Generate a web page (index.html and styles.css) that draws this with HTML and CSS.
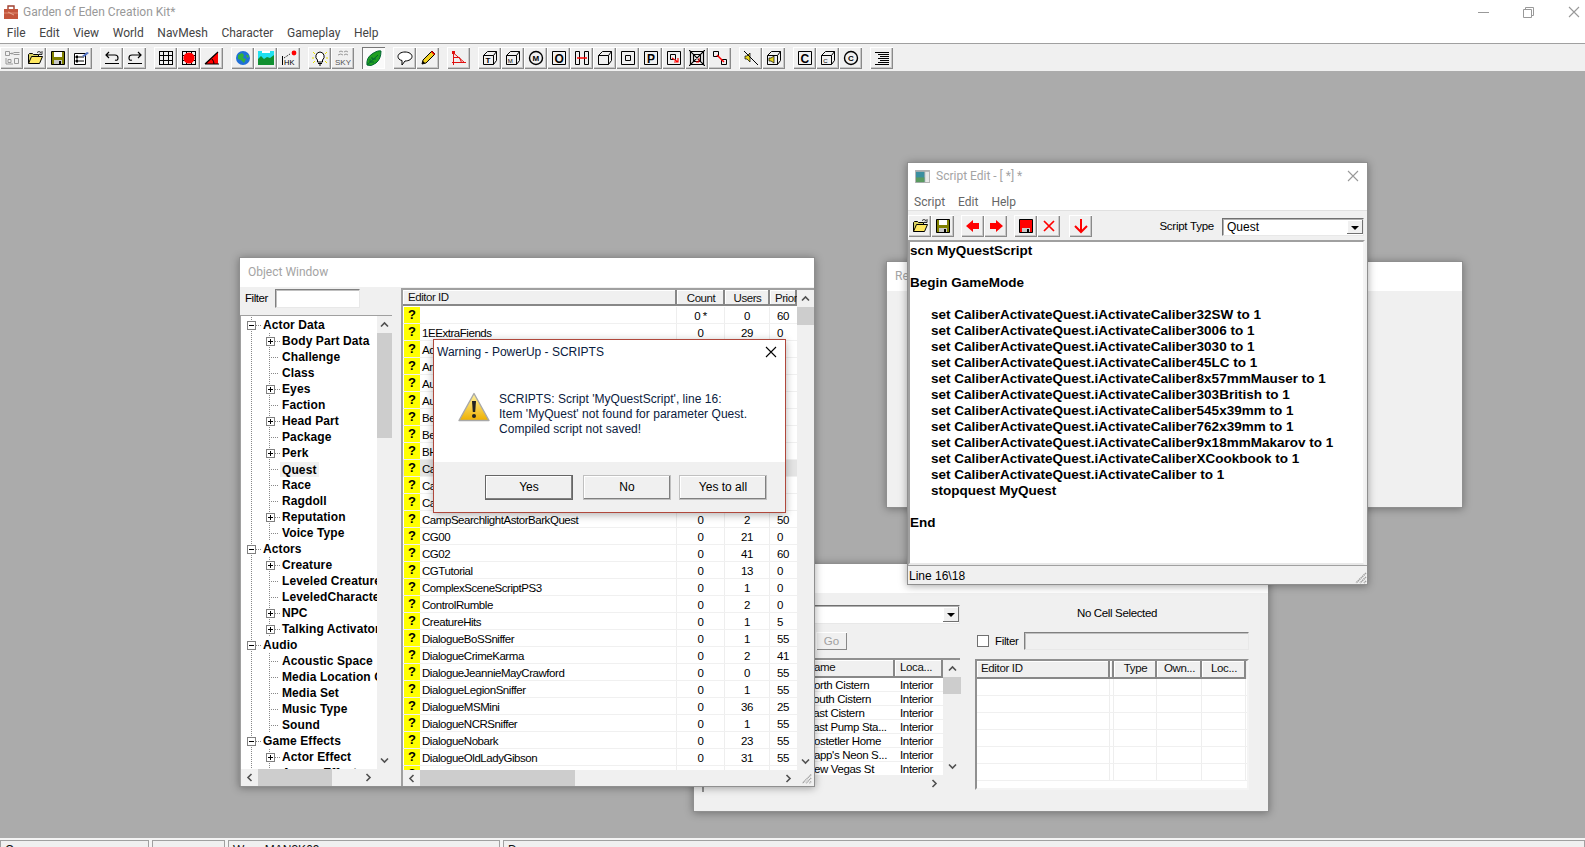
FILE: index.html
```html
<!DOCTYPE html>
<html lang="en">
<head>
<meta charset="utf-8">
<title>Garden of Eden Creation Kit*</title>
<link rel="stylesheet" href="styles.css">
</head>
<body>
<svg class="sprite" aria-hidden="true">
  <symbol id="up" viewBox="0 0 9 7"><path d="M1 5.500l3.500-3.500 3.500 3.500" fill="none" stroke="#505050" stroke-width="1.600"/></symbol>
  <symbol id="down" viewBox="0 0 9 7"><path d="M1 1.500l3.500 3.500 3.500-3.500" fill="none" stroke="#505050" stroke-width="1.600"/></symbol>
  <symbol id="left" viewBox="0 0 7 9"><path d="M5.500 1L2 4.500 5.500 8" fill="none" stroke="#505050" stroke-width="1.600"/></symbol>
  <symbol id="right" viewBox="0 0 7 9"><path d="M1.500 1L5 4.500 1.500 8" fill="none" stroke="#505050" stroke-width="1.600"/></symbol>
  <symbol id="x" viewBox="0 0 12 12"><path d="M1 1l10 10M11 1L1 11" fill="none" stroke="currentColor" stroke-width="1.100"/></symbol>
  <symbol id="grip" viewBox="0 0 14 14"><path d="M13 3L3 13M13 7l-6 6M13 11l-2 2" fill="none" stroke="#a0a0a0" stroke-width="1.600" stroke-dasharray="1.400 .6"/></symbol>
  <symbol id="open" viewBox="0 0 16 16"><path d="M1.500 13.500v-9l1-1h3l1 1h5v2" fill="#d8d060" stroke="#000"/><path d="M1.500 13.500l3-7h11l-3 7z" fill="#ffe860" stroke="#000"/><path d="M10 2.500q2-2 4 0l1-1v3h-3l1-1" fill="none" stroke="#000" stroke-width=".8"/></symbol>
  <symbol id="save" viewBox="0 0 16 16"><path d="M1.500 1.500h13v13h-13z" fill="#808000" stroke="#000"/><path d="M4 2h8v5H4z" fill="#fff"/><path d="M4 10h8v4H4z" fill="#c8c8c8"/><path d="M9 11h2v3H9z" fill="#000"/></symbol>
  <symbol id="cube" viewBox="0 0 16 16"><path d="M1.500 5.500h10v9h-10zM1.500 5.500l4-4h9v9l-3 4M11.500 5.500l3-4" fill="none" stroke="#000"/></symbol>
</svg>

<header class="titlebar">
  <svg class="appicon" viewBox="0 0 16 16"><path d="M1 5h14v10H1z" fill="#c4563c"/><path d="M5 5V2h6v3" fill="none" stroke="#a04030" stroke-width="1.400"/><path d="M1 9h14" stroke="#e08a70"/><path d="M5 8l6 3" stroke="#e8a890"/></svg>
  <span class="apptitle">Garden of Eden Creation Kit*</span>
  <div class="winctl">
    <svg viewBox="0 0 11 11"><path d="M0 5.500h11" stroke="#999"/></svg>
    <svg viewBox="0 0 11 11"><path d="M.5 2.500h8v8h-8zM2.500 2.500v-2h8v8h-2" fill="none" stroke="#999"/></svg>
    <svg viewBox="0 0 12 12" class="dim"><use href="#x"/></svg>
  </div>
</header>
<nav class="menubar">
  <span>File</span><span>Edit</span><span>View</span><span>World</span><span>NavMesh</span><span>Character</span><span>Gameplay</span><span>Help</span>
</nav>

<div class="toolbar">
  <div class="tg">
    <button class="tb"><svg viewBox="0 0 16 16"><path d="M1.500 1.500h4v4h-4zM9.500 4.500h6M9.500 2.500h6M2 8v6h7M4 9.500h3v3H4zM10.500 8.500h4v5h-4zM6 3.500h3l-1-1M9 3.500l-1 1" fill="none" stroke="#999"/></svg></button>
    <button class="tb"><svg viewBox="0 0 16 16"><use href="#open"/></svg></button>
    <button class="tb"><svg viewBox="0 0 16 16"><use href="#save"/></svg></button>
    <button class="tb"><svg viewBox="0 0 16 16"><path d="M1.500 3.500h11v11h-11z" fill="#fff" stroke="#000"/><path d="M3 6h2v2H3zM3 10h2v2H3zM6 7h5M6 11h5" stroke="#000"/><path d="M9 6l5-4 2 1-5 4z" fill="#5070c0"/></svg></button>
  </div>
  <div class="tg">
    <button class="tb"><svg viewBox="0 0 16 16"><path d="M5 2L2 5l3 3M2 5h9q3 0 3 3t-3 2" fill="none" stroke="#000" stroke-width="1.200"/><path d="M1 13h14v1H1z"/></svg></button>
    <button class="tb"><svg viewBox="0 0 16 16"><path d="M11 2l3 3-3 3M14 5H5q-3 0-3 3t3 2" fill="none" stroke="#000" stroke-width="1.200"/><path d="M1 13h14v1H1z"/></svg></button>
  </div>
  <div class="tg">
    <button class="tb"><svg viewBox="0 0 16 16"><path d="M1.500 1v14M5.500 1v14M10.500 1v14M14.500 1v14M1 1.500h14M1 5.500h14M1 10.500h14M1 14.500h14" stroke="#000" fill="none"/></svg></button>
    <button class="tb"><svg viewBox="0 0 16 16"><path d="M1.500 1v14M5.500 1v14M10.500 1v14M14.500 1v14M1 1.500h14M1 5.500h14M1 10.500h14M1 14.500h14" stroke="#000" fill="none"/><circle cx="8" cy="8" r="5.600" fill="#f00"/></svg></button>
    <button class="tb"><svg viewBox="0 0 16 16"><path d="M1 14L14 2v12z" fill="#f00"/><path d="M1 14h14M1 14L14 2" stroke="#000" stroke-width="1.200"/><path d="M10 14q0-3-2-5" fill="none" stroke="#000"/></svg></button>
  </div>
  <div class="tg">
    <button class="tb"><svg viewBox="0 0 16 16"><circle cx="8" cy="8" r="7" fill="#2070d8"/><path d="M3 5l4-2 2 2-1 3 3 1-2 4-3-3-3-1z" fill="#30b040"/><path d="M11 5h2l1 2-2 1z" fill="#30b040"/></svg></button>
    <button class="tb"><svg viewBox="0 0 16 16"><path d="M0 1h16v14H0z" fill="#20e0f0"/><path d="M0 15V9l3-3 3 3 3-2 3 1 4-3v10z" fill="#109030"/><path d="M4 1h8v2H4z" fill="#fff"/></svg></button>
    <button class="tb"><svg viewBox="0 0 16 16"><circle cx="13" cy="3" r="2.400" fill="#f00"/><path d="M1.500 6v9" stroke="#000"/><path d="M3 8l6-4" stroke="#000" stroke-dasharray="1 1"/><text x="3" y="15" class="ic-t hk">HK</text></svg></button>
  </div>
  <div class="tg">
    <button class="tb"><svg viewBox="0 0 16 16"><path d="M8 2a4.500 4.500 0 0 0-2.500 8v2h5v-2A4.500 4.500 0 0 0 8 2z" fill="#fff" stroke="#000"/><path d="M6 13.500h4M7 15h2" stroke="#000"/><path d="M1 2l2 2M15 2l-2 2M0 8h2M14 8h2M1 13l2-2M15 13l-2-2" stroke="#e8e000"/></svg></button>
    <button class="tb"><svg viewBox="0 0 16 16"><path d="M4 2q2-2 4 0M9 2q2-2 4 0M3 5q3-2 5 0M9 5q2-2 4 0" fill="none" stroke="#999"/><text x="0" y="15" class="ic-t big">SKY</text></svg></button>
  </div>
  <div class="tg">
    <button class="tb on"><svg viewBox="0 0 16 16"><path d="M1 15q-1-7 5-11t9-3q0 8-5 12t-9 2z" fill="#20a020" stroke="#063"/><path d="M1 15L12 5M4 9v3h4M6 7v2h4" fill="none" stroke="#063"/></svg></button>
  </div>
  <div class="tg">
    <button class="tb"><svg viewBox="0 0 16 16"><path d="M8 2c4 0 7 2 7 4.500S12 11 8 11l-3 4v-4.500C2 10 1 8 1 6.500 1 4 4 2 8 2z" fill="#fff" stroke="#000"/></svg></button>
    <button class="tb"><svg viewBox="0 0 16 16"><path d="M2 14l1-4 9-9 3 3-9 9z" fill="#f0d020" stroke="#000"/><path d="M12 1l3 3-1 1-3-3z" fill="#f00"/><path d="M2 14l1-3 2 2z"/></svg></button>
  </div>
  <div class="tg">
    <button class="tb"><svg viewBox="0 0 16 16"><path d="M2.500 1v14M1 12.500h14M2.500 3l11 9.500M2.500 7.500h6l2 5" fill="none" stroke="#e01010"/><path d="M1 1h3v3H1z" fill="#e01010"/></svg></button>
  </div>
  <div class="tg">
    <button class="tb"><svg viewBox="0 0 16 16"><use href="#cube"/><text x="3.500" y="13" class="ic-t bold">T</text></svg></button>
    <button class="tb"><svg viewBox="0 0 16 16"><use href="#cube"/><text x="2.800" y="13" class="ic-t">M</text></svg></button>
    <button class="tb"><svg viewBox="0 0 16 16"><circle cx="8" cy="8" r="6.500" fill="none" stroke="#000" stroke-width="1.400"/><text x="4.600" y="11" class="ic-t bold">M</text></svg></button>
    <button class="tb"><svg viewBox="0 0 16 16"><path d="M1.500 1.500h13v13h-13z" fill="none" stroke="#000"/><text x="3.500" y="12.500" class="ic-t huge">O</text></svg></button>
    <button class="tb"><svg viewBox="0 0 16 16"><path d="M1.500 1.500h4v13h-4zM10.500 1.500h4v13h-4z" fill="none" stroke="#000"/><path d="M3 8h10" stroke="#f00" stroke-width="1.500"/></svg></button>
    <button class="tb"><svg viewBox="0 0 16 16"><use href="#cube"/></svg></button>
    <button class="tb"><svg viewBox="0 0 16 16"><path d="M1.500 1.500h13v13h-13zM5.500 5.500h5v5h-5z" fill="none" stroke="#000"/></svg></button>
    <button class="tb"><svg viewBox="0 0 16 16"><path d="M1.500 1.500h13v13h-13z" fill="none" stroke="#000"/><text x="4" y="12.500" class="ic-t huge">P</text></svg></button>
    <button class="tb"><svg viewBox="0 0 16 16"><path d="M1.500 1.500h13v13h-13zM4.500 4.500h5v5h-5z" fill="none" stroke="#000"/><path d="M6 8l6 4M12 8v4H8" fill="none" stroke="#f00" stroke-width="1.200"/></svg></button>
    <button class="tb"><svg viewBox="0 0 16 16"><path d="M1.500 1.500h13v13h-13zM4.500 4.500h7v7h-7zM0 0l16 16M16 0L0 16" fill="none" stroke="#000" stroke-width="1.200"/><path d="M10 8v4H7" fill="none" stroke="#f00"/></svg></button>
    <button class="tb"><svg viewBox="0 0 16 16"><path d="M1.500 1.500h5v5h-5zM9.500 9.500h5v5h-5z" fill="none" stroke="#000"/><path d="M5 5l7 7" stroke="#f00" stroke-width="1.500"/></svg></button>
  </div>
  <div class="tg">
    <button class="tb"><svg viewBox="0 0 16 16"><path d="M2 6h2l3-3v9L4 9H2z" fill="#e8d820" stroke="#000" stroke-width=".7"/><path d="M1 1l14 14" stroke="#000"/></svg></button>
    <button class="tb"><svg viewBox="0 0 16 16"><use href="#cube"/><path d="M3 8h2l3-2v7l-3-2H3z" fill="#e8d820" stroke="#000" stroke-width=".7"/></svg></button>
  </div>
  <div class="tg">
    <button class="tb"><svg viewBox="0 0 16 16"><path d="M1.500 1.500h13v13h-13z" fill="none" stroke="#000"/><text x="3.500" y="12.500" class="ic-t huge">C</text></svg></button>
    <button class="tb"><svg viewBox="0 0 16 16"><use href="#cube"/><text x="3.200" y="13" class="ic-t">C</text></svg></button>
    <button class="tb"><svg viewBox="0 0 16 16"><circle cx="8" cy="8" r="6.500" fill="none" stroke="#000" stroke-width="1.400"/><text x="5" y="11" class="ic-t bold">C</text></svg></button>
  </div>
  <div class="tg">
    <button class="tb"><svg viewBox="0 0 16 16"><path d="M1 2.500h14M4 4.500h11M6 6.500h9M4 8.500h11M6 10.500h9M4 12.500h11M1 14.500h14" stroke="#000" fill="none"/></svg></button>
  </div>
</div>

<main class="desktop">
  <!-- Render window (behind) -->
  <section class="win render">
    <div class="wtitle tall"><span class="wname">Re</span></div>
  </section>

  <!-- Cell view window (behind) -->
  <section class="win cellview">
    <div class="wtitle tall"></div>
    <div class="cv-body">
      <div class="cv-left">
        <div class="combo cv-combo"><span>Interior Cells &amp; Areas</span><i class="combo-btn"></i></div>
        <div class="cv-go"><button class="btn-flat">Go</button></div>
        <div class="cv-list">
          <div class="cv-table">
            <div class="hdr cv-row"><span class="hc">X</span><span class="hc">Y</span><span class="hc">Name</span><span class="hc">Loca...</span></div>
            <div class="cv-row"><span></span><span></span><span>North Cistern</span><span>Interior</span></div>
            <div class="cv-row"><span></span><span></span><span>South Cistern</span><span>Interior</span></div>
            <div class="cv-row"><span></span><span></span><span>East Cistern</span><span>Interior</span></div>
            <div class="cv-row"><span></span><span></span><span>East Pump Sta...</span><span>Interior</span></div>
            <div class="cv-row"><span></span><span></span><span>Hostetler Home</span><span>Interior</span></div>
            <div class="cv-row"><span></span><span></span><span>Rapp's Neon S...</span><span>Interior</span></div>
            <div class="cv-row"><span></span><span></span><span>New Vegas St</span><span>Interior</span></div>
          </div>
          <div class="vs cv-vs"><svg class="ar"><use href="#up"/></svg><i class="thumb t-cv"></i><i class="sp"></i><svg class="ar"><use href="#down"/></svg></div>
          <div class="hs cv-hs"><i class="sp"></i><svg class="arh"><use href="#right"/></svg></div>
        </div>
      </div>
      <div class="cv-right">
        <div class="cv-nocell">No Cell Selected</div>
        <div class="cv-filter"><i class="check"></i><span>Filter</span><i class="field"></i></div>
        <div class="cv-grid">
          <div class="hdr cg-row"><span class="hc">Editor ID</span><span class="hc tiny"></span><span class="hc ctr">Type</span><span class="hc ctr">Own...</span><span class="hc ctr">Loc...</span></div>
          <div class="cg-row"><span></span><span></span><span></span><span></span><span></span></div>
          <div class="cg-row"><span></span><span></span><span></span><span></span><span></span></div>
          <div class="cg-row"><span></span><span></span><span></span><span></span><span></span></div>
          <div class="cg-row"><span></span><span></span><span></span><span></span><span></span></div>
          <div class="cg-row"><span></span><span></span><span></span><span></span><span></span></div>
          <div class="cg-row"><span></span><span></span><span></span><span></span><span></span></div>
        </div>
      </div>
    </div>
  </section>

  <!-- Object window -->
  <section class="win objwin">
    <div class="wtitle tall"><span class="wname">Object Window</span></div>
    <div class="ob-body">
      <div class="ob-left">
        <div class="ob-filter"><span>Filter</span><i class="field white"></i></div>
        <div class="tree-box">
          <div class="tree">
            <div class="tr"><i class="bx"></i>Actor Data</div>
            <div class="tr ch"><i class="bx plus"></i>Body Part Data</div>
            <div class="tr ch"><i class="nb"></i>Challenge</div>
            <div class="tr ch"><i class="nb"></i>Class</div>
            <div class="tr ch"><i class="bx plus"></i>Eyes</div>
            <div class="tr ch"><i class="nb"></i>Faction</div>
            <div class="tr ch"><i class="bx plus"></i>Head Part</div>
            <div class="tr ch"><i class="nb"></i>Package</div>
            <div class="tr ch"><i class="bx plus"></i>Perk</div>
            <div class="tr ch"><i class="nb"></i><b class="sel">Quest</b></div>
            <div class="tr ch"><i class="nb"></i>Race</div>
            <div class="tr ch"><i class="nb"></i>Ragdoll</div>
            <div class="tr ch"><i class="bx plus"></i>Reputation</div>
            <div class="tr ch last"><i class="nb"></i>Voice Type</div>
            <div class="tr"><i class="bx"></i>Actors</div>
            <div class="tr ch"><i class="bx plus"></i>Creature</div>
            <div class="tr ch"><i class="nb"></i>Leveled Creature</div>
            <div class="tr ch"><i class="nb"></i>LeveledCharacter</div>
            <div class="tr ch"><i class="bx plus"></i>NPC</div>
            <div class="tr ch last"><i class="bx plus"></i>Talking Activator</div>
            <div class="tr"><i class="bx"></i>Audio</div>
            <div class="tr ch"><i class="nb"></i>Acoustic Space</div>
            <div class="tr ch"><i class="nb"></i>Media Location Controller</div>
            <div class="tr ch"><i class="nb"></i>Media Set</div>
            <div class="tr ch"><i class="nb"></i>Music Type</div>
            <div class="tr ch last"><i class="nb"></i>Sound</div>
            <div class="tr"><i class="bx"></i>Game Effects</div>
            <div class="tr ch"><i class="bx plus"></i>Actor Effect</div>
            <div class="tr ch"><i class="nb"></i>Ammo Effect</div>
          </div>
          <div class="vs"><svg class="ar"><use href="#up"/></svg><i class="thumb t-tree"></i><i class="sp"></i><svg class="ar"><use href="#down"/></svg></div>
          <div class="hs"><svg class="arh"><use href="#left"/></svg><i class="hthumb t-th"></i><i class="sp"></i><svg class="arh"><use href="#right"/></svg></div>
        </div>
      </div>
      <div class="ob-list">
        <div class="listview">
          <div class="hdr lv-row"><span class="hc">Editor ID</span><span class="hc ctr">Count</span><span class="hc ctr">Users</span><span class="hc">Prior</span></div>
          <div class="lv-row"><span><i class="q">?</i></span><span>0 *</span><span>0</span><span>60</span></div>
          <div class="lv-row"><span><i class="q">?</i>1EExtraFiends</span><span>0</span><span>29</span><span>0</span></div>
          <div class="lv-row"><span><i class="q">?</i>AdvancedStart</span><span>0</span><span>1</span><span>0</span></div>
          <div class="lv-row"><span><i class="q">?</i>ArmorSet</span><span>0</span><span>1</span><span>0</span></div>
          <div class="lv-row"><span><i class="q">?</i>AudioQuest</span><span>0</span><span>1</span><span>0</span></div>
          <div class="lv-row"><span><i class="q">?</i>AutoDoc</span><span>0</span><span>1</span><span>0</span></div>
          <div class="lv-row"><span><i class="q">?</i>BeckyQuest</span><span>0</span><span>1</span><span>0</span></div>
          <div class="lv-row"><span><i class="q">?</i>BennyQuest</span><span>0</span><span>1</span><span>0</span></div>
          <div class="lv-row"><span><i class="q">?</i>BHQuest</span><span>0</span><span>1</span><span>0</span></div>
          <div class="lv-row hl"><span><i class="q">?</i>CaliberActivate</span><span>0</span><span>1</span><span>0</span></div>
          <div class="lv-row"><span><i class="q">?</i>CampQuest</span><span>0</span><span>1</span><span>0</span></div>
          <div class="lv-row"><span><i class="q">?</i>CampGolf</span><span>0</span><span>1</span><span>0</span></div>
          <div class="lv-row"><span><i class="q">?</i>CampSearchlightAstorBarkQuest</span><span>0</span><span>2</span><span>50</span></div>
          <div class="lv-row"><span><i class="q">?</i>CG00</span><span>0</span><span>21</span><span>0</span></div>
          <div class="lv-row"><span><i class="q">?</i>CG02</span><span>0</span><span>41</span><span>60</span></div>
          <div class="lv-row"><span><i class="q">?</i>CGTutorial</span><span>0</span><span>13</span><span>0</span></div>
          <div class="lv-row"><span><i class="q">?</i>ComplexSceneScriptPS3</span><span>0</span><span>1</span><span>0</span></div>
          <div class="lv-row"><span><i class="q">?</i>ControlRumble</span><span>0</span><span>2</span><span>0</span></div>
          <div class="lv-row"><span><i class="q">?</i>CreatureHits</span><span>0</span><span>1</span><span>5</span></div>
          <div class="lv-row"><span><i class="q">?</i>DialogueBoSSniffer</span><span>0</span><span>1</span><span>55</span></div>
          <div class="lv-row"><span><i class="q">?</i>DialogueCrimeKarma</span><span>0</span><span>2</span><span>41</span></div>
          <div class="lv-row"><span><i class="q">?</i>DialogueJeannieMayCrawford</span><span>0</span><span>0</span><span>55</span></div>
          <div class="lv-row"><span><i class="q">?</i>DialogueLegionSniffer</span><span>0</span><span>1</span><span>55</span></div>
          <div class="lv-row"><span><i class="q">?</i>DialogueMSMini</span><span>0</span><span>36</span><span>25</span></div>
          <div class="lv-row"><span><i class="q">?</i>DialogueNCRSniffer</span><span>0</span><span>1</span><span>55</span></div>
          <div class="lv-row"><span><i class="q">?</i>DialogueNobark</span><span>0</span><span>23</span><span>55</span></div>
          <div class="lv-row"><span><i class="q">?</i>DialogueOldLadyGibson</span><span>0</span><span>31</span><span>55</span></div>
          <div class="lv-row"><span><i class="q">?</i></span><span></span><span></span><span></span></div>
        </div>
        <div class="vs"><svg class="ar"><use href="#up"/></svg><i class="thumb t-lv"></i><i class="sp"></i><svg class="ar"><use href="#down"/></svg></div>
        <div class="hs"><svg class="arh"><use href="#left"/></svg><i class="hthumb t-lh"></i><i class="sp"></i><svg class="arh"><use href="#right"/></svg></div>
        <svg class="gripbox"><use href="#grip"/></svg>
      </div>
    </div>
  </section>

  <!-- Script editor -->
  <section class="win script">
    <div class="wtitle">
      <svg class="se-ico" viewBox="0 0 16 14"><path d="M0 0h16v14H0z" fill="#b0b0b0"/><path d="M1 2h9v11H1z" fill="#3b8fa0"/><path d="M1 8h9v5H1z" fill="#5a9a60"/><path d="M11 2h4v11h-4z" fill="#e8e8e8"/></svg>
      <span class="wname">Script Edit - [ *] *</span>
      <svg class="wclose"><use href="#x"/></svg>
    </div>
    <div class="se-menu"><span>Script</span><span>Edit</span><span>Help</span></div>
    <div class="se-tools">
      <div class="tg">
        <button class="tb"><svg viewBox="0 0 16 16"><use href="#open"/></svg></button>
        <button class="tb"><svg viewBox="0 0 16 16"><use href="#save"/></svg></button>
      </div>
      <div class="tg">
        <button class="tb"><svg viewBox="0 0 16 16"><path d="M1 8l7-6v3h6v6H8v3z" fill="#f00"/></svg></button>
        <button class="tb"><svg viewBox="0 0 16 16"><path d="M15 8L8 2v3H2v6h6v3z" fill="#f00"/></svg></button>
      </div>
      <div class="tg">
        <button class="tb"><svg viewBox="0 0 16 16"><path d="M1.500 1.500h13v13h-13z" fill="#f00" stroke="#000"/><path d="M4 10h8v4H4z" fill="#c8c8c8"/><path d="M9 11h2v3H9z"/></svg></button>
        <button class="tb"><svg viewBox="0 0 16 16"><path d="M3 3l10 10M13 3L3 13" stroke="#f00" stroke-width="1.700"/></svg></button>
      </div>
      <div class="tg last-tg">
        <button class="tb"><svg viewBox="0 0 16 16"><path d="M8 1v13M2 8l6 6 6-6" fill="none" stroke="#f00" stroke-width="2"/></svg></button>
      </div>
      <span class="se-label">Script Type</span>
      <div class="combo se-combo"><span>Quest</span><i class="combo-btn"></i></div>
    </div>
<pre class="code">scn MyQuestScript

Begin GameMode

&#9;set CaliberActivateQuest.iActivateCaliber32SW to 1
&#9;set CaliberActivateQuest.iActivateCaliber3006 to 1
&#9;set CaliberActivateQuest.iActivateCaliber3030 to 1
&#9;set CaliberActivateQuest.iActivateCaliber45LC to 1
&#9;set CaliberActivateQuest.iActivateCaliber8x57mmMauser to 1
&#9;set CaliberActivateQuest.iActivateCaliber303British to 1
&#9;set CaliberActivateQuest.iActivateCaliber545x39mm to 1
&#9;set CaliberActivateQuest.iActivateCaliber762x39mm to 1
&#9;set CaliberActivateQuest.iActivateCaliber9x18mmMakarov to 1
&#9;set CaliberActivateQuest.iActivateCaliberXCookbook to 1
&#9;set CaliberActivateQuest.iActivateCaliber to 1
&#9;stopquest MyQuest

End</pre>
    <div class="se-status"><span>Line 16\18</span><svg class="grip"><use href="#grip"/></svg></div>
  </section>

  <!-- Warning dialog -->
  <section class="dialog">
    <div class="dlg-title"><span>Warning - PowerUp - SCRIPTS</span><svg class="dlg-x"><use href="#x"/></svg></div>
    <div class="dlg-msg">
      <svg class="warn" viewBox="0 0 32 30">
        <defs><linearGradient id="wg" x1="0" y1="0" x2="0" y2="1"><stop offset="0" stop-color="#fff2a0"/><stop offset="1" stop-color="#eeb000"/></linearGradient></defs>
        <path d="M16 1.500L31 28.500H1z" fill="url(#wg)" stroke="#a8a8a8" stroke-width="1.400" stroke-linejoin="round"/>
        <path d="M14 9h4l-.8 11h-2.400z" fill="#222"/><circle cx="16" cy="24" r="2" fill="#222"/>
      </svg>
      <p>SCRIPTS: Script 'MyQuestScript', line 16:<br>Item 'MyQuest' not found for parameter Quest.<br>Compiled script not saved!</p>
    </div>
    <div class="dlg-foot">
      <button class="dbtn def">Yes</button>
      <button class="dbtn">No</button>
      <button class="dbtn">Yes to all</button>
    </div>
  </section>
</main>

<footer class="statusbar">
  <div class="sb s1">Camera</div>
  <div class="sb s2"></div>
  <div class="sb s3">Wor&nbsp;&nbsp;&nbsp;MAN3K09</div>
  <div class="sb s4">Done</div>
</footer>
</body>
</html>
```

FILE: styles.css
```css
* { box-sizing: border-box; }
html, body { margin: 0; height: 847px; overflow: hidden; }
body {
  display: flex; flex-direction: column;
  width: 1585px; background: #fff;
  font: 12px/16px "Liberation Sans", Arial, sans-serif; color: #000;
}
.sprite { width: 0; height: 0; position: absolute; }
button { font: inherit; padding: 0; margin: 0; color: inherit; }
i { font-style: normal; display: block; }

/* app chrome */
.titlebar { height: 24px; display: flex; align-items: center; padding: 0 5px 0 3px; flex: none; background: #fff; }
.appicon { width: 16px; height: 16px; margin-right: 4px; }
.apptitle { font: 12px Roboto, sans-serif; color: #999; }
.winctl { margin-left: auto; display: flex; gap: 34px; align-items: center; color: #999; }
.winctl svg { width: 11px; height: 11px; display: block; }
.winctl .dim { width: 12px; height: 12px; }
.menubar { height: 20px; flex: none; display: flex; font: 12px Roboto, sans-serif; color: #444; background: #fff; border-bottom: 1px solid #a0a0a0; padding-top: 1px; }
.menubar span { padding: 1px 6.800px 0; }
.toolbar { height: 27px; flex: none; background: #f0f0f0; display: flex; gap: 8px; padding: 3px 0 0 0; }
.tg { display: flex; }
.tb {
  width: 23px; height: 22px; border: 0; display: flex; align-items: center; justify-content: center;
  background: #f0f0f0;
  box-shadow: inset 1px 1px #fff, inset -1px -1px #8a8a8a, inset -2px -2px #c8c8c8;
}
.tb svg { width: 16px; height: 16px; display: block; }
.tb.on { background: #fafafa; box-shadow: inset 1px 1px #777, inset -1px -1px #fff; }
.ic-t { font: 6px "Liberation Sans", sans-serif; fill: #000; }
.ic-t.big { font-size: 8px; fill: #555; }
.ic-t.hk { font-size: 7.500px; }
.ic-t.bold { font-weight: 700; font-size: 8px; }
.ic-t.huge { font-weight: 700; font-size: 12px; }

.desktop { flex: 1; position: relative; background: #ababab; overflow: hidden; }
.statusbar { height: 9px; flex: none; display: flex; gap: 3px; background: #f4f4f4; overflow: hidden; padding-top: 2px; }
.sb { background: #f0f0f0; border: 1px solid #a0a0a0; border-width: 1px 1px 0 1px; padding-left: 4px; line-height: 14px; padding-top: 2px; color: #111; }
.s1 { width: 149px; }
.s2 { width: 73px; }
.s3 { width: 272px; }
.s4 { flex: 1; }

/* windows on the desktop */
.win { position: absolute; background: #f0f0f0; box-shadow: 0 1px 8px rgba(0,0,0,.35); border: 1px solid #8f8f8f; }
.render   { left: 886px; top: 190px; width: 577px; height: 247px; }
.cellview { left: 693px; top: 492px; width: 576px; height: 249px; }
.objwin   { left: 239px; top: 186px; width: 576px; height: 530px; }
.script   { left: 907px; top: 91px;  width: 461px; height: 423px; }
.wtitle { background: #fff; display: flex; align-items: center; height: 29px; }
.wtitle.tall { height: 29px; padding: 0 0 2px 8px; }
.wname { font: 12px Roboto, sans-serif; color: #a4a4a4; }

/* object window */
.ob-body { display: flex; height: 499px; }
.ob-left { width: 158px; display: flex; flex-direction: column; }
.ob-filter { height: 28px; padding-bottom: 6px; display: flex; align-items: center; gap: 3px; padding-left: 5px; flex: none; font-size: 11.500px; letter-spacing: -.45px; }
.field { width: 85px; height: 18px; border: 1px solid; border-color: #808080 #e8e8e8 #e8e8e8 #808080; box-shadow: inset 1px 1px #c0c0c0; background: #f0f0f0; }
.field.white { background: #fff; width: 85px; margin-left: 4px; height: 19px; }
.tree-box { flex: 1; display: grid; grid-template-columns: 136px 15px; grid-template-rows: 453px 17px; border-top: 1px solid #a0a0a0; border-left: 1px solid #a0a0a0; width: 152px; min-height: 0; }
.tree { background: #fff; overflow: hidden; font: 700 12px/16px "Liberation Sans", sans-serif; padding-top: 1px; }
.tr { height: 16px; display: flex; align-items: center; white-space: nowrap; padding-left: 6px; position: relative;
  background-image: linear-gradient(#888 50%, transparent 50%); background-size: 1px 2px; background-position: 10px 0; background-repeat: repeat-y; letter-spacing: .1px; }
.tr.ch { padding-left: 25px;
  background-image: linear-gradient(#888 50%, transparent 50%), linear-gradient(#888 50%, transparent 50%);
  background-position: 10px 0, 28px 0; }
.tr.ch.last { background-size: 1px 2px, 1px 2px; }
.bx { width: 9px; height: 9px; border: 1px solid #808080; background-color: #fff; margin-right: 7px; flex: none; position: relative;
  background-image: linear-gradient(#000, #000); background-size: 5px 1px; background-position: center; background-repeat: no-repeat; }
.bx.plus { background-image: linear-gradient(#000, #000), linear-gradient(#000, #000); background-size: 5px 1px, 1px 5px; }
.bx::after { content: ""; position: absolute; left: 8px; top: 3px; width: 5px; border-top: 1px dotted #888; }
.ch .nb { height: 1px; width: 10px; margin: 0 3px 0 3px; flex: none; background-image: linear-gradient(90deg, #888 50%, transparent 50%); background-size: 2px 1px; }
.sel { background: #f0f0f0; padding: 0 2px; margin-left: -2px; height: 15px; }

.vs { background: #f0f0f0; display: flex; flex-direction: column; align-items: center; min-height: 0; }
.hs { background: #f0f0f0; display: flex; align-items: center; }
.sp { flex: 1; }
.ar { width: 9px; height: 7px; margin: 5px 0; flex: none; }
.arh { width: 7px; height: 9px; margin: 0 5px; flex: none; }
.thumb { width: 100%; background: #cdcdcd; flex: none; }
.hthumb { background: #cdcdcd; height: 100%; flex: none; }
.t-tree { height: 105px; }
.t-lv { height: 18px; }
.t-cv { height: 17px; }
.t-th { width: 74px; }
.t-lh { width: 155px; }

.ob-list { flex: 1; position: relative; margin-left: 4px; margin-top: 1px; display: grid; grid-template-columns: 394px 17px; grid-template-rows: 480px 16px; border-top: 2px solid #a0a0a0; border-left: 2px solid #a0a0a0; }
.listview { background: #fff; overflow: hidden; font-size: 11.500px; letter-spacing: -.45px; }
.hdr { background: #f0f0f0; }
.lv-row { display: grid; grid-template-columns: 274px 48px 45px 27px; height: 17px; border-bottom: 1px solid #f0f0f0; white-space: nowrap; line-height: 16px; }
.lv-row > span { border-right: 1px solid #eee; text-align: center; overflow: hidden; padding-top: 1px; }
.lv-row > span:first-child { text-align: left; display: flex; padding-left: 1px; padding-top: 0; line-height: 18px; }
.lv-row > span:last-child { text-align: left; padding-left: 7px; border-right: 0; }
.lv-row.hdr { height: 16px; border: 0; margin-bottom: 1px; }
.hc { box-shadow: inset -2px -2px #888, inset 1px 1px #fff; border: 0 !important; padding-left: 4px; line-height: 15px; color: #111; }
.lv-row.hdr > .hc { padding-left: 5px; line-height: 15px; }
.lv-row.hdr > .hc.ctr { text-align: center; padding-left: 0; }
.lv-row.hdr > .hc:last-child { padding-left: 5px; }
.hl { background: #e4e4e4; }
.q { width: 16px; margin-right: 2px; background: #ff0; text-align: center; font: 700 13px/16px "Liberation Sans", sans-serif; letter-spacing: 0; flex: none; height: 16px; }
.gripbox { position: absolute; right: 2px; bottom: 2px; width: 12px; height: 12px; }

/* cell view */
.cv-body { display: flex; height: 219px; padding-top: 12px; font-size: 11.500px; letter-spacing: -.35px; }
.cv-left { width: 267px; padding-left: 8px; }
.combo { background: #fff; display: flex; align-items: center; border: 1px solid; border-color: #707070 #e8e8e8 #e8e8e8 #707070; box-shadow: inset 1px 1px #b0b0b0; padding-left: 4px; position: relative; overflow: hidden; }
.combo span { flex: 1; white-space: nowrap; }
.combo-btn { width: 16px; align-self: stretch; margin: 1px 0 1px; background: #f0f0f0; box-shadow: inset -1px -1px #707070, inset 1px 1px #fff; position: relative; flex: none; }
.combo-btn::after { content: ""; position: absolute; left: 4px; top: 6px; border: 4px solid transparent; border-top: 4px solid #000; border-bottom: 0; }
.cv-combo { height: 19px; width: 258px; }
.cv-go { height: 34px; padding: 8px 0 0 114px; }
.btn-flat { width: 31px; height: 18px; border: 0; background: #f0f0f0; color: #a0a0a0; box-shadow: inset 1px 1px #fff, inset -1px -1px #888; }
.cv-list { display: grid; grid-template-columns: 239px 18px; grid-template-rows: 115px 17px; border-top: 2px solid #909090; border-left: 2px solid #909090; width: 258px; }
.cv-table { background: #fff; overflow: hidden; line-height: 14px; }
.cv-row { display: grid; grid-template-columns: 50px 47px 94px 48px; height: 14px; white-space: nowrap; border-bottom: 1px solid #f0f0f0; }
.cv-row > span { overflow: hidden; padding-left: 5px; }
.cv-row.hdr { height: 18px; line-height: 17px; border: 0; }
.cv-hs { justify-content: flex-end; }
.cv-right { flex: 1; padding-left: 14px; }
.cv-nocell { height: 16px; text-align: center; width: 284px; }
.cv-filter { display: flex; align-items: center; gap: 6px; margin-top: 11px; height: 18px; }
.check { width: 12px; height: 12px; background: #fff; border: 1px solid #707070; margin-left: 2px; }
.cv-filter .field { width: 225px; margin-left: 0; background: #f0f0f0; }
.cv-grid { margin-top: 9px; width: 274px; height: 131px; background: #fff; border-top: 2px solid #909090; border-left: 2px solid #909090; border-right: 2px solid #f4f4f4; border-bottom: 2px solid #f4f4f4; overflow: hidden; }
.cg-row { display: grid; grid-template-columns: 133px 4px 43px 45px 44px 1fr; height: 17px; border-bottom: 1px solid #f0f0f0; }
.cg-row > span { border-right: 1px solid #eee; }
.cg-row.hdr { height: 18px; line-height: 16px; border: 0; }
.cg-row .ctr { text-align: center; padding-left: 0; }

/* script editor */
.script .wtitle { height: 28px; padding: 0 0 2px 7px; }
.se-ico { width: 15px; height: 13px; margin-right: 6px; }
.wclose { width: 12px; height: 12px; margin-left: auto; margin-right: 8px; color: #999; }
.se-menu { height: 19px; background: #fff; display: flex; font: 12px Roboto, sans-serif; color: #666; padding: 4px 0 0 6px; gap: 13px; }
.se-tools { height: 28px; display: flex; gap: 7px; align-items: center; padding: 3px 3px 0 0; border-top: 1px solid #e0e0e0; }
.se-tools .tg { flex: none; }
.last-tg { margin-left: 2px; }
.se-label { margin-left: auto; margin-top: -1px; margin-right: 1px; font-size: 11.500px; letter-spacing: -.25px; }
.se-combo { width: 142px; height: 18px; margin-top: 1px; }
.code { margin: 2px 2px 0 0; height: 325px; background: #fff; border: 2px solid; border-color: #a0a0a0 #f4f4f4 #e8e8e8 #a0a0a0; padding: 1px 0 0 0; overflow: hidden;
  font: 700 13.500px/16px "Liberation Sans", sans-serif; white-space: pre; tab-size: 21px; }
.se-status { height: 19px; display: flex; justify-content: space-between; align-items: center; border-top: 1px solid #a0a0a0; padding: 1px 0 0 1px; }
.grip { width: 14px; height: 14px; align-self: flex-end; }

/* dialog */
.dialog { position: absolute; left: 433px; top: 268px; width: 353px; height: 174px; background: #fff; border: 1px solid #b0483c; box-shadow: 0 2px 8px rgba(0,0,0,.3); display: flex; flex-direction: column; }
.dlg-title { height: 24px; display: flex; align-items: center; padding-left: 3px; color: #0a2040; flex: none; }
.dlg-x { width: 12px; height: 12px; margin-left: auto; margin-right: 8px; color: #000; }
.dlg-msg { flex: 1; display: flex; color: #0a2040; padding: 28px 0 0 24px; }
.warn { width: 32px; height: 30px; margin: 0 9px 0 0; flex: none; }
.dlg-msg p { margin: 0; line-height: 15px; letter-spacing: .03px; }
.dlg-foot { height: 50px; flex: none; background: #f0f0f0; display: flex; padding: 13px 0 0 51px; gap: 10px; }
.dbtn { width: 88px; height: 25px; border: 1px solid #c0c0c0; background: #f0f0f0; box-shadow: inset -1px -1px #808080, inset 1px 1px #fff; line-height: 23px; }
.dbtn.def { border: 1px solid #666; box-shadow: inset -1px -1px #808080, inset 1px 1px #fff; }
.dbtn:last-child { margin-left: -2px; }
```
